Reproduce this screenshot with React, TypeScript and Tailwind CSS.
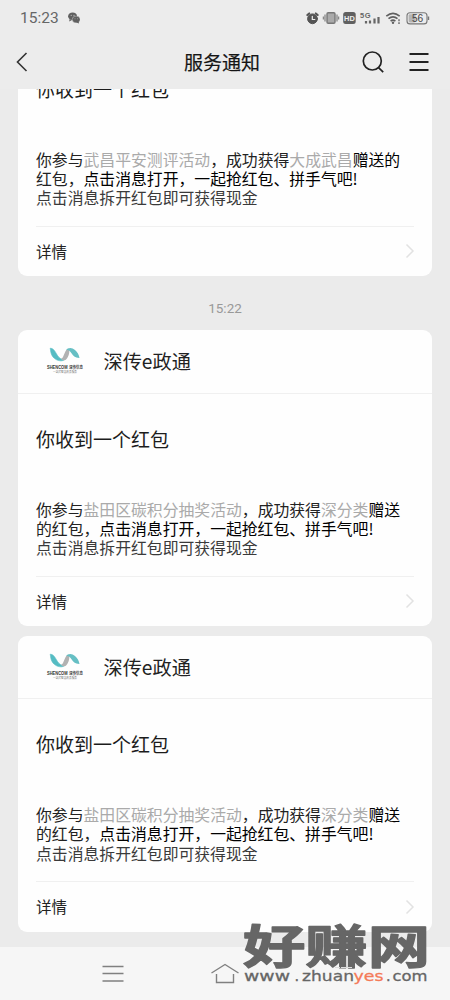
import React from 'react';

interface Notice {
    id: number;
    activity: string;
    sender: string;
    wrapped: string;
    tail: string;
}

const notices: Notice[] = [
    { id: 1, activity: '武昌平安测评活动', sender: '大成武昌', tail: '赠送的', wrapped: '红包，' },
    { id: 2, activity: '盐田区碳积分抽奖活动', sender: '深分类', tail: '赠送', wrapped: '的红包，' },
    { id: 3, activity: '盐田区碳积分抽奖活动', sender: '深分类', tail: '赠送', wrapped: '的红包，' }
];

const WechatIcon = () => (
    <svg className="ml-[9px] w-3 h-3" viewBox="0 0 12 12">
        <ellipse cx="4.6" cy="4.3" rx="4.5" ry="3.9" fill="#606060" />
        <path d="M1.6 7L1.2 9.4L4 8Z" fill="#606060" />
        <ellipse cx="8.2" cy="7.5" rx="4" ry="3.4" fill="#606060" stroke="#ececec" strokeWidth=".4" />
        <path d="M10.6 9.6L11 11.6L8.4 10.5Z" fill="#606060" />
        <g fill="#ececec">
            <circle cx="3.2" cy="3.2" r=".5" />
            <circle cx="6" cy="3.2" r=".5" />
            <circle cx="7" cy="6.8" r=".4" />
            <circle cx="9.4" cy="6.8" r=".4" />
        </g>
    </svg>
);

const StatusIcons = () => (
    <svg className="w-[126px] h-4" viewBox="0 0 126 16" fontFamily="Liberation Sans, sans-serif">
        {/* Alarm */}
        <g stroke="#555" strokeLinecap="round" fill="none">
            <circle cx="7.5" cy="8.8" r="4.9" fill="#555" strokeWidth="1" />
            <path d="M2.3 5L4.2 3.4M12.7 5L10.8 3.4" strokeWidth="2" />
            <path d="M7.3 6.3V9.5H9.8" stroke="#eee" strokeWidth="1.2" />
        </g>
        {/* Vibrate */}
        <rect x="22" y="2.7" width="8" height="10.6" rx="1.2" fill="#aaa" stroke="#777" strokeWidth="1.4" />
        <path d="M20 4.6V11.4M32 4.6V11.4M18.4 6.5V9.5M33.6 6.5V9.5" stroke="#888" strokeWidth="1.3" />
        {/* HD */}
        <rect x="38.2" y="2" width="12.5" height="12" rx="2.5" fill="#606060" />
        <text x="44.4" y="10.7" fontSize="7.4" fontWeight="700" fill="#eee" textAnchor="middle">HD</text>
        {/* Signal */}
        <text x="55" y="7.7" fontSize="7.5" fontWeight="700" fill="#666" textLength="10.5">5G</text>
        <path d="M61 13.5V11M65 13.5V10.5M69.5 13.5V8.5M73.5 13.5V7" stroke="#666" strokeWidth="2.2" />
        {/* Wifi */}
        <g fill="none" stroke="#606060" strokeWidth="1.6">
            <path d="M81.3 6.1Q88 0.6 94.7 6.1" />
            <path d="M83.5 8.7Q88 5 92.5 8.7" />
            <path d="M85.6 11.1Q88 9.2 90.4 11.1" />
        </g>
        <circle cx="88" cy="12.8" r="1.2" fill="#606060" />
        <path d="M94 9.3V11.3M94 12.3V14" stroke="#777" strokeWidth="1.6" />
        {/* Battery */}
        <rect x="102" y="2.7" width="20" height="11.2" rx="3" fill="none" stroke="#777" strokeWidth="1.1" />
        <rect x="103.6" y="4.2" width="7" height="8.2" rx="1.4" fill="#b4b4b4" />
        <path d="M123.5 6.5V10" stroke="#777" strokeWidth="1.4" />
        <text x="112.6" y="12" fontSize="10.2" fill="#444" textAnchor="middle">56</text>
    </svg>
);

const ShencomLogo = () => (
    <svg className="w-10 h-[30px] shrink-0" viewBox="0 0 40 30" fontFamily="'Noto Sans CJK SC', sans-serif">
        <path d="M5.2 2.2C10.5 2.3 10.6 9.2 15.4 12.5C17 13.7 18.6 13.8 19.7 13.5C17.7 15.4 13.2 15.4 9.7 12.6C5.6 9.4 5.8 5.2 5.2 2.2Z" fill="#55bcc3" stroke="#55bcc3" strokeWidth=".6" />
        <path d="M15.6 12.4C18.2 13.2 18.6 8.1 21 4.4C21.8 3.2 22.8 2.6 23.8 2.8C25.5 5.6 23 13.5 19.7 14.3C18.4 14.5 17 13.8 15.6 12.4Z" fill="#b2b2b2" />
        <path d="M21 4.4C23 1.2 27 1.2 30 4.1C32.6 6.8 33.8 8.4 34.5 12C29.6 11.6 28.4 10 26.3 7C24.7 4.6 22.8 3.3 21 4.4Z" fill="#66bfc4" />
        <text x="2" y="22.5" fontFamily="Liberation Sans, sans-serif" fontSize="4.6" fontWeight="700" fill="#333" textLength="20.5" lengthAdjust="spacingAndGlyphs">SHENCOM</text>
        <text x="24" y="22.6" fontSize="4" fontWeight="700" fill="#444" textLength="14" lengthAdjust="spacingAndGlyphs">深传信息</text>
        <text x="8" y="27.2" fontSize="3" fill="#777" textLength="24" lengthAdjust="spacingAndGlyphs">一站式智慧政务服务</text>
    </svg>
);

const NoticeCard: React.FC<{ notice: Notice }> = ({ notice }) => (
    <section className="h-[296px] shrink-0 rounded-[9px] bg-[#fefefe] flex flex-col">
        <div className="h-[63.5px] shrink-0 flex items-center pl-[27px] border-b border-[#f0f0f0]">
            <ShencomLogo />
            <span className="ml-[18.5px] text-[19.2px] leading-7 text-[#222]">深传e政通</span>
        </div>
        <div className="px-[18px] flex-1 flex flex-col">
            <h2 className="mt-[31px] text-[19px] leading-7 text-[#1c1c1c]">你收到一个红包</h2>
            <div className="mt-[47px] text-[15.83px] leading-[19.3px] whitespace-nowrap text-[#222]">
                <p>
                    你参与<span className="text-[#aaa]">{notice.activity}</span>，成功获得
                    <span className="text-[#aaa]">{notice.sender}</span>
                    <span className="text-black">{notice.tail}</span>
                </p>
                <p>{notice.wrapped}<span className="text-black">点击消息打开，一起抢红包、拼手气吧!</span></p>
                <p className="text-[#3a3a3a]">点击消息拆开红包即可获得现金</p>
            </div>
            <div className="mt-auto h-[50.5px] border-t border-[#f0f0f0] flex items-center justify-between">
                <span className="text-[15.5px] text-[#222]">详情</span>
                <svg className="-mr-px w-[10px] h-4" viewBox="0 0 10 16" fill="none" stroke="#e2e2e2" strokeWidth="1.5">
                    <path d="M1.5 1.5L8 8L1.5 14.5" />
                </svg>
            </div>
        </div>
    </section>
);

const App = () => {
    return (
        <div className="relative w-[450px] h-[1000px] overflow-hidden bg-[#ebebeb] flex flex-col font-['Noto_Sans_CJK_SC',sans-serif]">
            {/* Top bar */}
            <header className="h-[89px] shrink-0 bg-[#ececec]">
                <div className="h-[35px] flex items-center justify-between pl-5 pr-[19px]">
                    <div className="flex items-center">
                        <span className="font-[Roboto] text-[15.5px] leading-5 text-[#666]">15:23</span>
                        <WechatIcon />
                    </div>
                    <StatusIcons />
                </div>
                <div className="h-[54px] grid grid-cols-[1fr_auto_1fr] items-center pl-4 pr-[21px]">
                    <svg className="w-3 h-5" viewBox="0 0 12 20" fill="none" stroke="#333" strokeWidth="1.6">
                        <path d="M10.5 1L1.5 10L10.5 19" />
                    </svg>
                    <h1 className="-ml-px text-[19px] leading-7 text-[#151515] [-webkit-text-stroke:0.2px_#151515]">服务通知</h1>
                    <div className="flex items-center justify-end gap-[25.5px]">
                        <svg className="w-[22px] h-[22px]" viewBox="0 0 22 22" fill="none" stroke="#222" strokeWidth="1.7">
                            <circle cx="10.3" cy="10" r="9" />
                            <path d="M16.3 16.3L21.2 21.2" />
                        </svg>
                        <svg className="w-5 h-5" viewBox="0 0 20 20" stroke="#222" strokeWidth="1.8">
                            <path d="M0.5 2H19.5M0.5 10H19.5M0.5 18H19.5" />
                        </svg>
                    </div>
                </div>
            </header>

            {/* Message list, scrolled past the first card's header */}
            <main className="h-[858px] shrink-0 overflow-hidden px-[18px]">
                <div className="-mt-[109px] flex flex-col">
                    <NoticeCard notice={notices[0]} />
                    <time className="h-[54px] pt-[11px] text-center text-[#999] font-[Roboto] text-[13.5px] leading-[43px]">15:22</time>
                    <div className="flex flex-col gap-[9.5px]">
                        {notices.slice(1).map((n) => (
                            <NoticeCard key={n.id} notice={n} />
                        ))}
                    </div>
                </div>
            </main>

            {/* System navigation */}
            <nav className="h-[53px] bg-[#f6f6f6] flex items-center pl-[102px] gap-[87px]">
                <svg className="w-[22px] h-5" viewBox="0 0 22 20" stroke="#808080" strokeWidth="1.5">
                    <path d="M0.5 2.5H21.5M0.5 9.5H21.5M0.5 17H21.5" />
                </svg>
                <svg className="w-7 h-[22px]" viewBox="0 0 28 22" fill="none" stroke="#808080" strokeWidth="1.4">
                    <path d="M0.5 10L14 1.5L27.5 10M5.5 11V19.5H22.5V11" />
                </svg>
            </nav>

            {/* Site mark over the corner */}
            <div className="absolute left-[243px] top-[914px] w-[190px] h-[76px]">
                <svg className="w-full h-full" viewBox="0 0 190 76" fill="#666">
                    <text
                        x="0"
                        y="48.5"
                        fontFamily="'Noto Sans CJK SC', sans-serif"
                        fontWeight="700"
                        fontSize="46"
                        stroke="#666"
                        strokeWidth="1.3"
                        strokeLinejoin="round"
                        textLength="187"
                        lengthAdjust="spacingAndGlyphs"
                    >
                        好赚网
                    </text>
                    <g fontFamily="'DejaVu Sans', sans-serif" fontSize="14.5" stroke="#666" strokeWidth=".3">
                        <text x="1" y="66.5" textLength="46" lengthAdjust="spacingAndGlyphs">www</text>
                        <text x="51.5" y="66.5">.</text>
                        <text x="59" y="66.5" textLength="52" lengthAdjust="spacingAndGlyphs">zhuan</text>
                        <text x="110.5" y="66.5" fill="#f47a58" stroke="#f47a58" textLength="30" lengthAdjust="spacingAndGlyphs">yes</text>
                        <text x="143" y="66.5">.</text>
                        <text x="149.5" y="66.5" textLength="35" lengthAdjust="spacingAndGlyphs">com</text>
                    </g>
                    <path d="M92 53.5H110" stroke="#ddd" strokeWidth="1.2" strokeDasharray="5 1" />
                </svg>
            </div>
        </div>
    );
};

export default App;
